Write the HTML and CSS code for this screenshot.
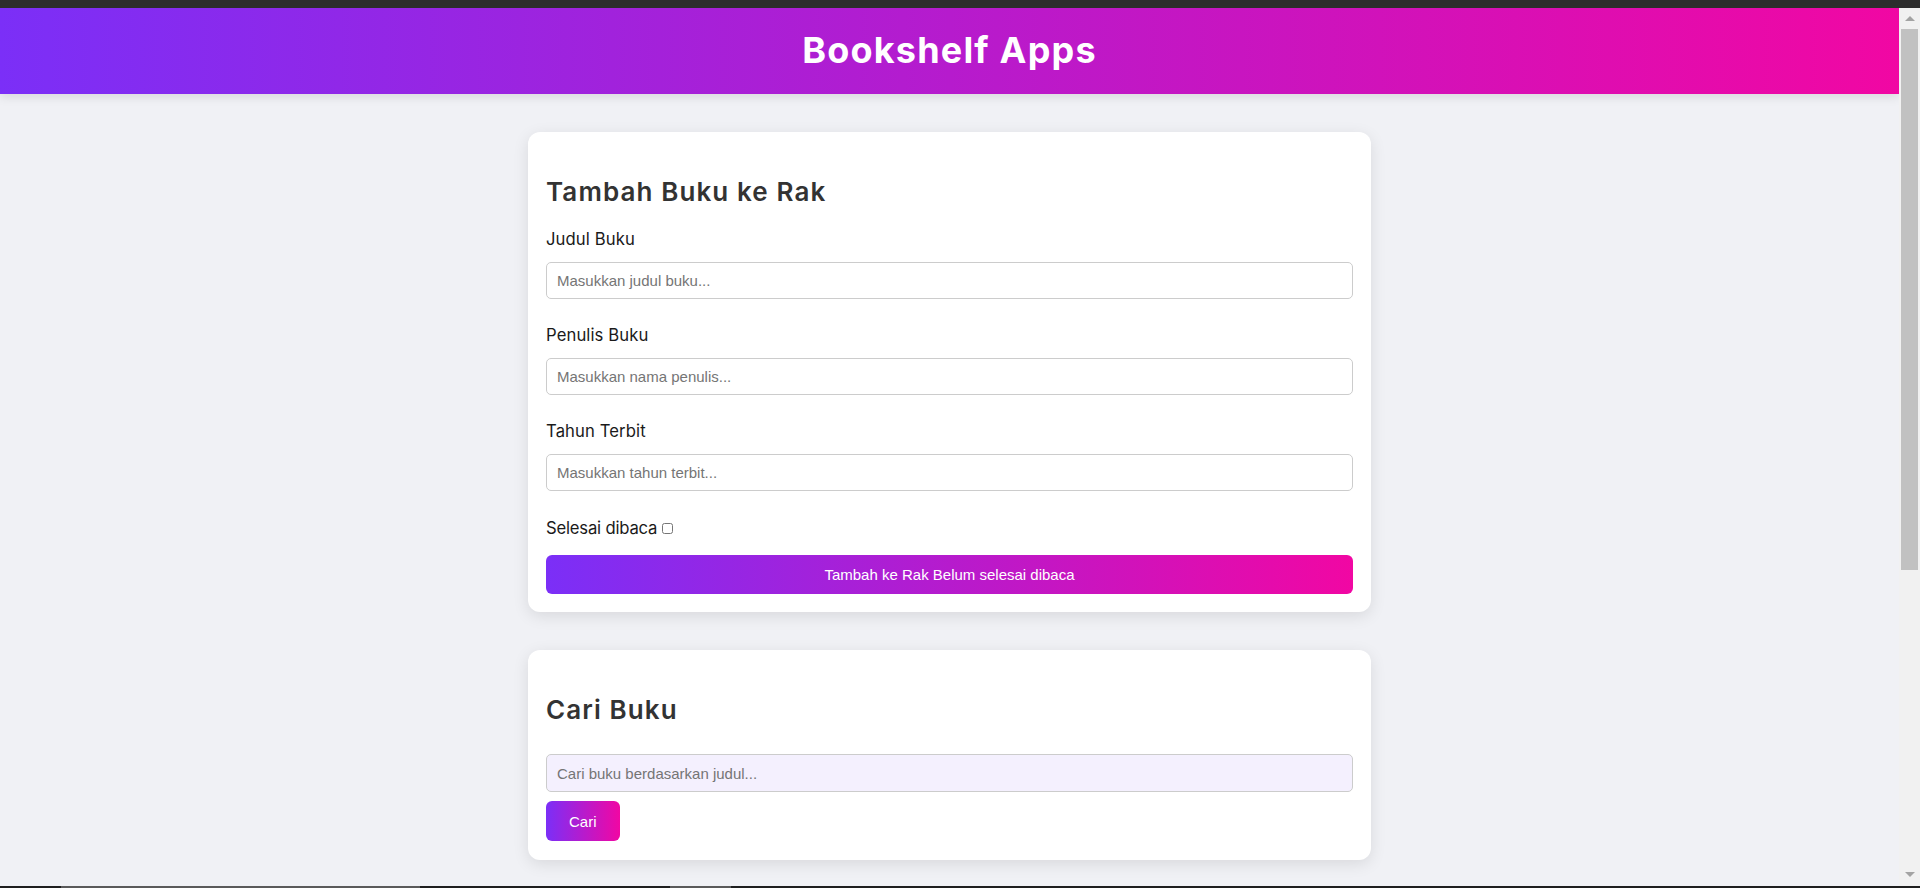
FILE: index.html
```html
<!DOCTYPE html>
<html lang="id">
<head>
<meta charset="utf-8">
<title>Bookshelf Apps</title>
<link rel="stylesheet" href="styles.css">
</head>
<body>
<div class="chrome-top"></div>
<div class="window">
  <div class="viewport">
    <header class="app-header">
      <h1 class="app-title">Bookshelf Apps</h1>
    </header>
    <main class="main">
      <section class="card">
        <h2 class="card-title">Tambah Buku ke Rak</h2>
        <form class="book-form">
          <div class="field">
            <label class="field-label" for="bookTitle">Judul Buku</label>
            <input class="text-input" id="bookTitle" type="text" placeholder="Masukkan judul buku...">
          </div>
          <div class="field">
            <label class="field-label" for="bookAuthor">Penulis Buku</label>
            <input class="text-input" id="bookAuthor" type="text" placeholder="Masukkan nama penulis...">
          </div>
          <div class="field">
            <label class="field-label" for="bookYear">Tahun Terbit</label>
            <input class="text-input" id="bookYear" type="text" placeholder="Masukkan tahun terbit...">
          </div>
          <div class="check-row">
            <label class="field-label check-label" for="bookDone">Selesai dibaca</label>
            <input class="check" id="bookDone" type="checkbox">
          </div>
          <button class="btn btn-block" type="button">Tambah ke Rak Belum selesai dibaca</button>
        </form>
      </section>

      <section class="card card-search">
        <h2 class="card-title search-title">Cari Buku</h2>
        <form class="search-form">
          <input class="text-input search-input" type="text" placeholder="Cari buku berdasarkan judul...">
          <button class="btn btn-small" type="button">Cari</button>
        </form>
      </section>
    </main>
  </div>
  <div class="scrollbar">
    <div class="sb-button sb-up"><span class="arrow-up"></span></div>
    <div class="sb-track"><div class="sb-thumb"></div></div>
    <div class="sb-button sb-down"><span class="arrow-down"></span></div>
  </div>
</div>
<div class="chrome-bottom">
  <span class="task task-a"></span>
  <span class="task task-b"></span>
</div>
</body>
</html>
```

FILE: styles.css
```css
* {
  box-sizing: border-box;
}

html,
body {
  margin: 0;
  padding: 0;
  height: 888px;
  overflow: hidden;
}

body {
  background: #f0f1f5;
  font-family: Inter, "Noto Sans", "Liberation Sans", sans-serif;
  display: flex;
  flex-direction: column;
}

.chrome-top {
  height: 8px;
  flex: none;
  background: #2d2d2d;
}

.chrome-bottom {
  height: 2px;
  flex: none;
  background: #1f1f1f;
  display: flex;
}

.task {
  display: block;
  height: 2px;
  background: #5a5a5a;
}

.task-a {
  margin-left: 61px;
  width: 359px;
}

.task-b {
  margin-left: 250px;
  width: 61px;
}

.window {
  height: 878px;
  flex: none;
  display: flex;
}

.viewport {
  flex: 1;
  min-width: 0;
  overflow: hidden;
  background: #f0f1f5;
}

/* drawn scrollbar */
.scrollbar {
  width: 21px;
  flex: none;
  display: flex;
  flex-direction: column;
  background: #f1f1f1;
}

.sb-button {
  height: 21px;
  flex: none;
  display: flex;
  justify-content: center;
}

.sb-up {
  align-items: flex-start;
  padding-top: 8px;
}

.sb-down {
  align-items: flex-start;
  padding-top: 7px;
}

.arrow-up {
  width: 0;
  height: 0;
  border-left: 5px solid transparent;
  border-right: 5px solid transparent;
  border-bottom: 5px solid #a3a3a3;
}

.arrow-down {
  width: 0;
  height: 0;
  border-left: 5px solid transparent;
  border-right: 5px solid transparent;
  border-top: 5px solid #a3a3a3;
}

.sb-track {
  flex: 1;
  padding: 0 2px;
}

.sb-thumb {
  height: 541px;
  background: #c1c1c1;
}

.app-header {
  height: 86px;
  padding-bottom: 2px;
  display: flex;
  align-items: center;
  justify-content: center;
  background: linear-gradient(to right, #7b2ff7, #f107a3);
  box-shadow: 0 3px 10px rgba(0, 0, 0, 0.1);
}

.app-title {
  margin: 0;
  color: #ffffff;
  font-size: 36px;
  line-height: 36px;
  font-weight: 700;
  letter-spacing: 1.2px;
}

.main {
  display: flex;
  flex-direction: column;
  align-items: center;
  gap: 38px;
  padding: 38px 0 39px;
}

.card {
  width: 843px;
  padding: 44px 18px 18px;
  background: #ffffff;
  border-radius: 12px;
  box-shadow: 0 4px 16px rgba(0, 0, 0, 0.1);
}

.card-title {
  margin: 0 0 21px;
  color: #333333;
  font-size: 26px;
  line-height: 32px;
  font-weight: 600;
  letter-spacing: 1.1px;
}

.search-title {
  margin-bottom: 28px;
}

.book-form {
  display: flex;
  flex-direction: column;
}

.field {
  display: flex;
  flex-direction: column;
  gap: 13px;
  margin-bottom: 26px;
}

.field-label {
  color: #1a1a1a;
  font-size: 16.67px;
  line-height: 20px;
  letter-spacing: 0.1px;
}

.check-label {
  letter-spacing: -0.2px;
}

.text-input {
  width: 100%;
  height: 37px;
  margin: 0;
  padding: 0 10px;
  border: 1px solid #cccccc;
  border-radius: 5px;
  background: #ffffff;
  font-family: "Liberation Sans", Arial, sans-serif;
  font-size: 15px;
  color: #222222;
  outline: none;
}

.text-input::placeholder {
  color: #757575;
}

.check-row {
  display: flex;
  align-items: center;
  gap: 5px;
  margin-top: 1px;
}

.check {
  width: 11px;
  height: 11px;
  margin: 0;
}

.btn {
  border: none;
  color: #ffffff;
  font-family: "Liberation Sans", Arial, sans-serif;
  font-size: 15px;
  background: linear-gradient(to right, #7b2ff7, #f107a3);
  border-radius: 6px;
  cursor: pointer;
}

.btn-block {
  width: 100%;
  height: 39px;
  margin-top: 17px;
}

.card-search {
  padding-bottom: 19px;
}

.search-form {
  display: flex;
  flex-direction: column;
  align-items: flex-start;
  gap: 9px;
}

.search-input {
  background: #f4f0fe;
  height: 38px;
}

.btn-small {
  height: 40px;
  padding: 0 23px;
}
```
